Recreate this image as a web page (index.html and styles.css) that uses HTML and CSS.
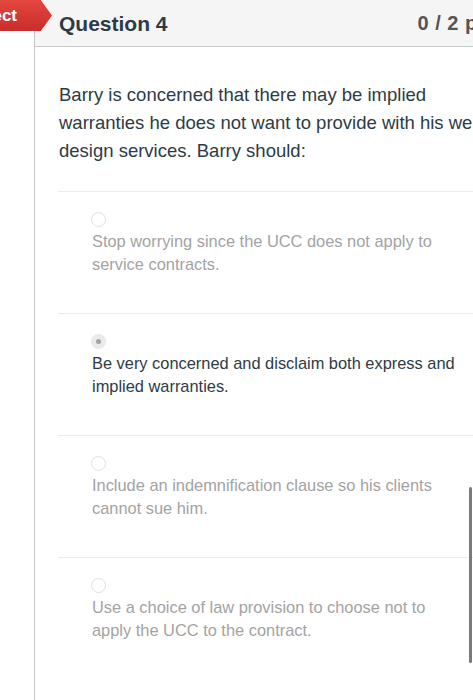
FILE: index.html
```html
<!DOCTYPE html>
<html lang="en">
<head>
<meta charset="utf-8">
<title>Question 4</title>
<link rel="stylesheet" href="styles.css">
</head>
<body>
<div class="badge"><span class="badge-text">Incorrect</span></div>
<div class="quiz">
  <div class="quiz-header">
    <h2 class="quiz-title">Question 4</h2>
    <span class="quiz-points">0 / 2 pts</span>
  </div>
  <div class="quiz-body">
    <p class="question-text">Barry is concerned that there may be implied warranties he does not want to provide with his web design services. Barry should:</p>
    <div class="answers">
      <div class="answer">
        <span class="radio"></span>
        <div class="answer-text muted">Stop worrying since the UCC does not apply to service contracts.</div>
      </div>
      <div class="answer">
        <span class="radio checked"></span>
        <div class="answer-text">Be very concerned and disclaim both express and implied warranties.</div>
      </div>
      <div class="answer">
        <span class="radio"></span>
        <div class="answer-text muted">Include an indemnification clause so his clients cannot sue him.</div>
      </div>
      <div class="answer">
        <span class="radio"></span>
        <div class="answer-text muted">Use a choice of law provision to choose not to apply the UCC to the contract.</div>
      </div>
    </div>
  </div>
</div>
<div class="scroll-indicator"></div>
</body>
</html>
```
FILE: styles.css
```css
html, body {
  margin: 0;
  padding: 0;
  overflow: hidden;
  background: #ffffff;
  font-family: "Liberation Sans", Arial, Helvetica, sans-serif;
}

.quiz {
  margin-left: 34px;
  width: 500px;
  min-height: 700px;
  border-left: 1px solid #c4c4c4;
}

.quiz-header {
  height: 47px;
  box-sizing: border-box;
  background: #f5f5f5;
  border-bottom: 1px solid #c9c9c9;
  display: flex;
  align-items: center;
  justify-content: space-between;
  padding: 0 40px 0 24px;
}

.quiz-title {
  margin: 0;
  font-size: 21px;
  font-weight: bold;
  color: #2d3b45;
  padding-top: 1px;
}

.quiz-points {
  font-size: 20px;
  font-weight: bold;
  color: #555555;
  padding-top: 1px;
  word-spacing: 1px;
}

.quiz-body {
  padding: 34px 40px 0 24px;
}

.question-text {
  margin: 0 0 26px 0;
  font-size: 18.5px;
  line-height: 28px;
  color: #2d3b45;
}

.answer {
  border-top: 1px solid #ececec;
  padding: 20px 34px 37px 34px;
  margin-left: -1px;
}

.radio {
  display: block;
  width: 15px;
  height: 15px;
  box-sizing: border-box;
  border-radius: 50%;
  border: 1px solid #e0e0e0;
  background: #ffffff;
  margin: 0 0 3px -1px;
  position: relative;
}

.radio.checked {
  background: #ebebeb;
  border-color: #e6e6e6;
}

.radio.checked::after {
  content: "";
  position: absolute;
  left: 4px;
  top: 4px;
  width: 5px;
  height: 5px;
  border-radius: 50%;
  background: #a3a3a3;
}

.answer-text {
  font-size: 16.4px;
  line-height: 23px;
  color: #2d3b45;
}

.answer-text.muted {
  color: #a3a3a3;
}

.badge {
  position: absolute;
  top: 0;
  left: -60px;
  width: 112px;
  height: 31px;
  background: linear-gradient(#e4473f, #c92d2c);
  clip-path: polygon(0 0, 90% 0, 100% 50%, 90% 100%, 0 100%);
  display: flex;
  align-items: center;
  justify-content: flex-end;
  box-sizing: border-box;
  padding: 1px 35px 0 0;
}

.badge-text {
  color: #ffffff;
  font-weight: bold;
  font-size: 17px;
}

.scroll-indicator {
  position: fixed;
  right: 1px;
  top: 487px;
  width: 3px;
  height: 176px;
  border-radius: 2px;
  background: #7a7a7a;
}
```
